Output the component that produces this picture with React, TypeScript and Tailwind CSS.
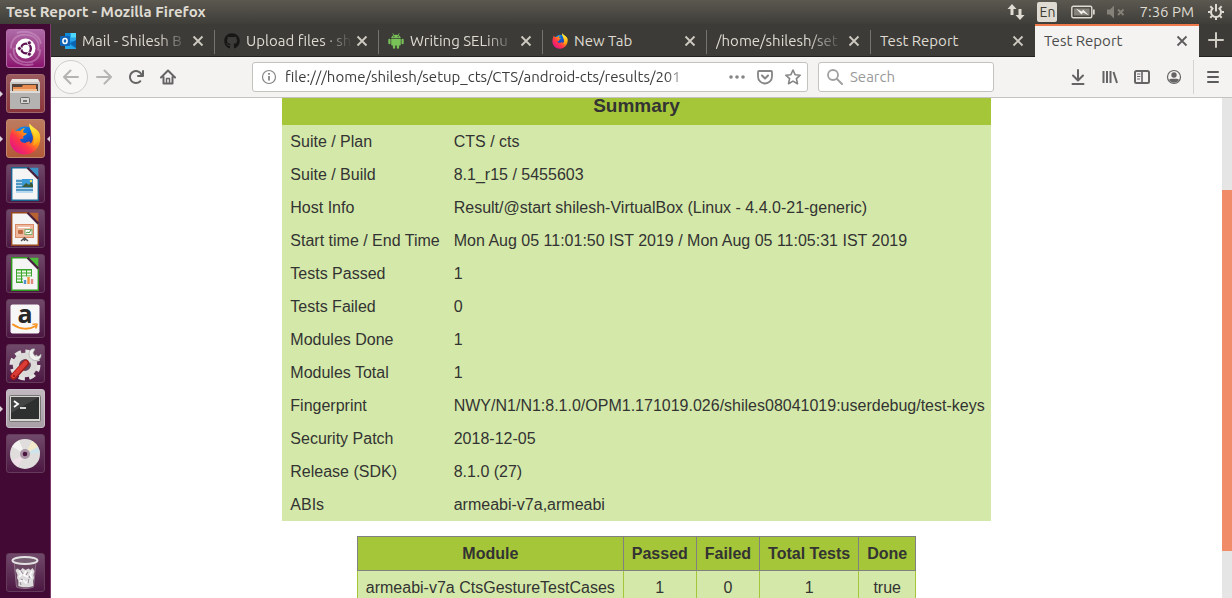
import type { ReactNode } from 'react';
import { FaGithub } from 'react-icons/fa';

const UI = "font-['Ubuntu','Noto_Sans',sans-serif]";

function FirefoxLogo({ id, className }: { id: string; className: string }) {
  return (
    <svg viewBox="0 0 32 32" className={className} aria-hidden="true">
      <defs>
        <linearGradient id={`${id}-body`} x1="0.85" y1="0.1" x2="0.15" y2="0.9">
          <stop offset="0" stopColor="#ffe226" />
          <stop offset="0.35" stopColor="#ff980e" />
          <stop offset="0.65" stopColor="#ff3647" />
          <stop offset="1" stopColor="#e31587" />
        </linearGradient>
        <linearGradient id={`${id}-globe`} x1="0" y1="0" x2="0.6" y2="1">
          <stop offset="0" stopColor="#0a9cf5" />
          <stop offset="0.6" stopColor="#0f5bd0" />
          <stop offset="1" stopColor="#3b2a9c" />
        </linearGradient>
        <linearGradient id={`${id}-flame`} x1="0.4" y1="0" x2="0.6" y2="1">
          <stop offset="0" stopColor="#fff04a" />
          <stop offset="0.5" stopColor="#ffd025" />
          <stop offset="1" stopColor="#ff9a16" />
        </linearGradient>
      </defs>
      <circle cx="16" cy="15" r="11.5" fill={`url(#${id}-globe)`} />
      <path
        d="M4 5c.3 1.400 1 2.500 2 3.500 1.500-.8 3.300-.9 5-.3C12.200 6.300 14 5.200 16 5c-1.300 1.200-2 2.700-1.800 4.300.6.8 2.600.7 3.500 1 .3 1.300-2.700 2.200-3.500 3.200-.1.900.3 1.700.1 2.600-1.300-.6-2.500-.2-3.300.5.6 2.400 2.700 3.600 5 3.300 2-.3 3-1.600 4.500-1.200 1 .4.500 1.400-.4 2.100 4-1 5-5.500 2.500-10.500-.8-3.500-2.200-6-2.100-9.700 3 5.400 10.600 6.400 10.800 14.400C31 24 25 31.500 16 31.500 7.500 31.500.8 25 .8 17 .8 12 2 8 4 5z"
        fill={`url(#${id}-body)`}
      />
      <path
        d="M20.500.6c-.5 3.300.5 5.600 2.500 8 2.500 3.200 3.400 9.600.6 14 4.500-1 7.500-5.600 7.300-10.400C30.500 6.500 22.700 5 20.500.6z"
        fill={`url(#${id}-flame)`}
      />
    </svg>
  );
}

function OutlookIcon() {
  return (
    <svg viewBox="0 0 16 16" className="size-4 shrink-0" aria-hidden="true">
      <path d="M5 0h11v9H5z" fill="#28a8ea" />
      <path d="M10.500 0H16v4.500h-5.500z" fill="#50d9ff" />
      <path d="M5 0h5.500v4.500H5z" fill="#0f89d8" />
      <path d="M5 8h11v8H5z" fill="#1490df" />
      <path d="m5 9 11 6.500V16H5z" fill="#28a8ea" />
      <path d="M10 10.500 16 7v8z" fill="#0a64b0" />
      <rect y="3" width="10" height="10" rx="1" fill="#0f64b8" />
      <ellipse cx="5" cy="8" rx="2.100" ry="2.500" fill="none" stroke="#fff" strokeWidth="1.500" />
    </svg>
  );
}

function AndroidIcon() {
  return (
    <svg viewBox="0 0 16 16" className="size-4 shrink-0" fill="#78c257" aria-hidden="true">
      <path d="M3.200 5.200C3.300 3.300 5 1.700 8 1.700s4.700 1.600 4.800 3.500z" />
      <path d="m4.700.3 1.500 2.200M11.300.3 9.800 2.500" stroke="#78c257" strokeWidth=".8" />
      <path d="M3.200 5.900h9.600v5.700a1 1 0 0 1-1 1H4.200a1 1 0 0 1-1-1z" />
      <rect x=".3" y="5.700" width="2.200" height="5.600" rx="1.100" />
      <rect x="13.500" y="5.700" width="2.200" height="5.600" rx="1.100" />
      <rect x="4.900" y="10.500" width="2.300" height="5.300" rx="1.100" />
      <rect x="8.800" y="10.500" width="2.300" height="5.300" rx="1.100" />
      <circle cx="5.900" cy="3.700" r=".6" fill="#3c3b37" />
      <circle cx="10.100" cy="3.700" r=".6" fill="#3c3b37" />
    </svg>
  );
}

function CloseIcon() {
  return (
    <svg viewBox="0 0 12 12" className="size-3" fill="none" stroke="currentColor" strokeWidth="1.800" aria-hidden="true">
      <path d="m1.500 1.500 9 9m0-9-9 9" />
    </svg>
  );
}

type TabInfo = { title: string; icon?: ReactNode; active?: boolean; divider?: boolean; faded?: boolean };

const tabs: TabInfo[] = [
  { title: 'Mail - Shilesh B', icon: <OutlookIcon />, divider: true, faded: true },
  { title: 'Upload files · sh', icon: <FaGithub className="size-4 shrink-0 text-[#161614]" />, divider: true, faded: true },
  { title: 'Writing SELinu', icon: <AndroidIcon />, divider: true, faded: true },
  { title: 'New Tab', icon: <FirefoxLogo id="tab" className="size-4 shrink-0" />, divider: true },
  { title: '/home/shilesh/set', divider: true, faded: true },
  { title: 'Test Report' },
  { title: 'Test Report', active: true },
];

function Tab({ title, icon, active, divider, faded }: TabInfo) {
  return (
    <div
      className={
        active
          ? 'relative flex min-w-0 flex-1 items-center gap-1 border-t-2 border-[#f0794c] bg-[#f4f3f2] pr-[11px] pb-px pl-[9px] text-[#4c4c4c]'
          : 'relative flex min-w-0 flex-1 items-center gap-1 border-t-2 border-b border-t-transparent border-b-[#22211e] pr-[11px] pl-[9px] text-[#dfdbd2]'
      }
    >
      <button role="tab" aria-selected={!!active} className="flex min-w-0 flex-1 items-center gap-1.5 text-left">
        {icon}
        <span
          className={
            faded
              ? 'min-w-0 flex-1 overflow-hidden text-[15px] leading-5 whitespace-nowrap [mask-image:linear-gradient(to_right,black_72%,transparent)]'
              : 'min-w-0 flex-1 overflow-hidden text-[15px] leading-5 whitespace-nowrap'
          }
        >
          {title}
        </span>
      </button>
      <button aria-label={`Close ${title}`} className="shrink-0 opacity-90">
        <CloseIcon />
      </button>
      {divider && <span className="absolute top-1 right-0 h-6 w-px bg-[#76746e]" />}
    </div>
  );
}

function Tile({ label, tone, running, focused, children }: { label: string; tone: string; running?: boolean; focused?: boolean; children: ReactNode }) {
  return (
    <button aria-label={label} className="relative flex h-[39px] w-full shrink-0 items-center justify-center px-1.5">
      {running && <span className="absolute left-0 h-0 w-0 border-y-3 border-l-3 border-y-transparent border-l-[#ddd5da]" />}
      <span className={`flex size-[39px] shrink-0 items-center justify-center rounded-[3px] border bg-linear-to-b ${tone}`}>{children}</span>
      {focused && <span className="absolute right-0 h-0 w-0 border-y-3 border-r-3 border-y-transparent border-r-[#ddd5da]" />}
    </button>
  );
}

function DocumentIcon({ color, dark, children }: { color: string; dark: string; children: ReactNode }) {
  return (
    <svg viewBox="0 0 28 34" className="h-[34px] w-7" aria-hidden="true">
      <path d="M.7.700h16.600l10 10.300v22.300H.700z" fill="#f5f5f5" stroke={dark} strokeWidth="1.400" />
      <path d="M16 .7h11.300v11z" fill={color} />
      <path d="m16.500.7 10.800 11" stroke="#46203d" strokeWidth="2.200" />
      {children}
    </svg>
  );
}

const dim = 'border-[#643c5a] from-[#70496a] to-[#4c1743]';

function Launcher() {
  return (
    <nav aria-label="Launcher" className="flex w-[51px] shrink-0 flex-col gap-1.5 border-r border-[#7a3b6c] bg-[#410934] pt-[5px] pb-1.5">
      <Tile label="Search your computer" tone="border-[#b66ba9] from-[#ad6aa7] to-[#8b116f]">
        <svg viewBox="0 0 38 38" className="size-[37px]" aria-hidden="true">
          <g fill="none" stroke="#d49bcb" strokeOpacity=".5" strokeWidth="2">
            <path d="M4 19C4 10 10 4 20 5c10 .5 14 8 12 16M34 20c0 9-7 15-16 13-9-1-12-8-11-15" />
            <path d="M10 3C20 0 32 3 35 14M27 35C18 38 6 34 3 24" />
          </g>
          <circle cx="19" cy="19" r="10.200" fill="#fff" />
          <circle cx="19.500" cy="19" r="5" fill="none" stroke="#5d1150" strokeWidth="2.400" />
          <path d="M13 19h4M22.700 13.500l-2 3.500M22.700 24.500l-2-3.500" stroke="#fff" strokeWidth="1" />
          <g fill="#5d1150" stroke="#fff" strokeWidth=".8">
            <circle cx="12.800" cy="19" r="2.100" />
            <circle cx="22.900" cy="13.200" r="2.100" />
            <circle cx="22.900" cy="24.800" r="2.100" />
          </g>
        </svg>
      </Tile>
      <Tile label="Files" running tone="border-[#a06a6c] from-[#9b5a5e] to-[#8b353a]">
        <svg viewBox="0 0 32 32" className="size-8" aria-hidden="true">
          <path d="M3 1h26l2 4H1z" fill="#e8e6e2" />
          <rect x="1" y="4" width="30" height="27" rx="1" fill="#c9c7c4" />
          <rect x="3" y="6" width="26" height="8" fill="#55433a" />
          <path d="M4 9h9l1-2h13v7H4z" fill="#e88b4f" />
          <path d="M4 11h24v2H4z" fill="#f4bd8c" />
          <path d="M1 13h30v17a1 1 0 0 1-1 1H2a1 1 0 0 1-1-1z" fill="#b5b3b1" />
          <path d="M1 13h30v2H1z" fill="#dddbd9" />
          <rect x="11.500" y="19.500" width="9" height="6" rx="1" fill="#d7d6d4" stroke="#6c6a68" />
          <rect x="14" y="22" width="4" height="2" fill="#767472" />
        </svg>
      </Tile>
      <Tile label="Firefox" running focused tone="border-[#c08a6e] from-[#bd7b5f] to-[#b25a38]">
        <FirefoxLogo id="dock" className="size-8" />
      </Tile>
      <Tile label="LibreOffice Writer" tone={dim}>
        <DocumentIcon color="#3d93c5" dark="#17648f">
          <rect x="5" y="12" width="17" height="14" fill="#b8daef" />
          <path d="M5 14h17M5 17h17M5 20h17M5 23h17" stroke="#3181b4" strokeWidth="1.400" />
          <rect x="11" y="12" width="11" height="8" fill="#3a9bd8" />
          <path d="m11 20 4-4 3 2 2-3 2 3v2z" fill="#3d5b39" />
          <circle cx="20" cy="14" r="1.300" fill="#f7de5d" />
        </DocumentIcon>
      </Tile>
      <Tile label="LibreOffice Impress" tone={dim}>
        <DocumentIcon color="#b86232" dark="#96471c">
          <rect x="4.500" y="12.500" width="18" height="13" fill="#efb79c" stroke="#d98a66" />
          <path d="M7 15.500h12" stroke="#fff" strokeWidth="1.300" />
          <rect x="7" y="18" width="5" height="4" rx="1" fill="#bd6943" />
          <rect x="14" y="17.500" width="7" height="5" fill="#fff" stroke="#7cab6c" />
          <path d="m15 21 2-1 1 1 2-3" fill="none" stroke="#4a8c37" />
          <path d="m10 29 3.500-3 3.500 3M13.500 25v4" fill="none" stroke="#555" strokeWidth="1.500" />
        </DocumentIcon>
      </Tile>
      <Tile label="LibreOffice Calc" tone={dim}>
        <DocumentIcon color="#4fbd3b" dark="#2d9a1d">
          <rect x="5" y="12" width="16" height="14" fill="#3da52d" />
          <path d="M6 14.500h4m1 0h4m1 0h4M6 17.500h4m1 0h4m1 0h4M6 20.500h4m1 0h4m1 0h4M6 23.500h4m1 0h4" stroke="#eaf8e6" strokeWidth="1.800" />
          <rect x="12" y="19.500" width="11" height="8" fill="#f0f3f7" />
          <path d="M14 23v4" stroke="#4e91cc" strokeWidth="2.400" />
          <path d="M17.500 20v7" stroke="#f09537" strokeWidth="2.400" />
          <path d="M21 22v5" stroke="#e08a80" strokeWidth="2.400" />
        </DocumentIcon>
      </Tile>
      <Tile label="Amazon" tone={dim}>
        <svg viewBox="0 0 30 30" className="size-[30px] overflow-visible" aria-hidden="true">
          <rect x=".5" y=".5" width="29" height="29" rx="2" fill="#f7f7f7" />
          <text x="15" y="19" textAnchor="middle" fill="#262626" className="font-['Open_Sans',sans-serif] text-[25px] font-bold">a</text>
          <path d="M3 20.500c7 5 16 5.500 22.500 1.500" fill="none" stroke="#f79420" strokeWidth="2" strokeLinecap="round" />
          <path d="M22.500 20.500c2-.7 3.500-.6 4.500-.3 0 1.500-.5 3-1.500 4.300" fill="none" stroke="#f79420" strokeWidth="1.500" />
        </svg>
      </Tile>
      <Tile label="System Settings" tone={dim}>
        <svg viewBox="0 0 34 34" className="size-[34px]" aria-hidden="true">
          <circle cx="17" cy="18" r="13" fill="none" stroke="#e3e2e1" strokeWidth="5" strokeDasharray="6 4.210" />
          <circle cx="17" cy="18" r="9" fill="none" stroke="#dcdbda" strokeWidth="6.500" />
          <circle cx="17" cy="18" r="5.500" fill="#62455b" />
          <path d="m17 18 8-9" stroke="#dcdcdb" strokeWidth="4" />
          <path d="M21 7c0-4 3-6 6-5l-2 4 2 3h4l2-2c1 5-4 8-8 6-2-1-4-3-4-6z" fill="#efefee" stroke="#999" strokeWidth=".6" />
          <path d="M5.500 29.500 18 16" stroke="#9f1a17" strokeWidth="6.500" strokeLinecap="round" />
          <path d="M5.500 29 17.500 16" stroke="#db3c35" strokeWidth="4.500" strokeLinecap="round" />
          <circle cx="6" cy="29" r="1" fill="#7d1613" />
        </svg>
      </Tile>
      <Tile label="Terminal" running tone="border-[#c8c0c6] from-[#c1b9bf] to-[#a99fa6]">
        <svg viewBox="0 0 32 27" className="h-[27px] w-8" aria-hidden="true">
          <rect x=".5" y=".5" width="31" height="26" rx="1" fill="#d7d6d3" stroke="#777" />
          <rect x="2" y="2" width="28" height="22" fill="#2d302f" />
          <path d="M2 2h28L2 18z" fill="#424544" />
          <path d="m5 6 4 3-4 3" fill="none" stroke="#fff" strokeWidth="1.800" />
          <path d="M11 13h6" stroke="#fff" strokeWidth="1.600" />
        </svg>
      </Tile>
      <Tile label="Disc" tone={dim}>
        <svg viewBox="0 0 32 32" className="size-8" aria-hidden="true">
          <circle cx="16" cy="16" r="15" fill="#dfdedd" />
          <path d="m16 16 7-13a15 15 0 0 1 6 6z" fill="#f2e9cb" />
          <path d="m16 16 13-7a15 15 0 0 1 2 6z" fill="#cfe3ea" />
          <path d="m16 16-7 13a15 15 0 0 1-6-6z" fill="#efdfe6" />
          <path d="m16 16-6-13.500a15 15 0 0 0-7 6z" fill="#f3f3f2" />
          <circle cx="16" cy="16" r="5" fill="#a995a5" />
          <circle cx="16" cy="16" r="2.300" fill="#4a153f" />
        </svg>
      </Tile>
      <div className="flex-1" />
      <Tile label="Trash" tone={dim}>
        <svg viewBox="0 0 28 33" className="h-[33px] w-7" aria-hidden="true">
          <path d="m3 5 2.500 26c5 2 12 2 17 0L25 5z" fill="#6a4862" stroke="#8e7087" />
          <path d="m4.500 14 2-1.500 3 2 2-2.500 3 2 3-1.500 2 1.500 2-2 2 3-1 4 .5 3-1 3 .3 5c-4 1.800-11 1.800-15 0l.2-5-1.500-3 .5-3z" fill="#dedbdd" />
          <path d="m8 15 3 3-3 3m7-6-2 4 4 2m4-6-2 4 2 3m-13 4 4-2 3 3 4-3" fill="none" stroke="#fbfafb" strokeWidth="1.700" />
          <path d="m10 15 2 3m5-2-2 3m-5 4 2 1m6-1-1 4m-8-1 1 3m8-9 1 2" stroke="#9a9098" strokeWidth="1.100" />
          <ellipse cx="14" cy="4.500" rx="12.500" ry="3.500" fill="#776073" stroke="#e4e1e3" strokeWidth="2" />
        </svg>
      </Tile>
    </nav>
  );
}

function Glyph({ children, className = 'size-4' }: { children: ReactNode; className?: string }) {
  return (
    <svg viewBox="0 0 16 16" className={className} fill="none" stroke="currentColor" strokeWidth="2" strokeLinecap="round" strokeLinejoin="round" aria-hidden="true">
      {children}
    </svg>
  );
}

function ToolButton({ label, children, className = 'text-[#646464]' }: { label: string; children: ReactNode; className?: string }) {
  return (
    <button aria-label={label} className={`flex size-8 shrink-0 items-center justify-center ${className}`}>
      <Glyph>{children}</Glyph>
    </button>
  );
}

function Toolbar() {
  return (
    <div className="flex h-[41px] shrink-0 items-center border-b border-[#c4c2bf] bg-[#f4f3f2] pl-[3px]">
      <button aria-label="Back" className="flex size-[34px] shrink-0 items-center justify-center rounded-full border border-[#d0cecb] bg-[#f8f7f6] text-[#b5b4b2]">
        <Glyph><path d="M15 8H1.500M7.500 1.500 1 8l6.500 6.500" /></Glyph>
      </button>
      <ToolButton label="Forward" className="text-[#b5b4b2]"><path d="M1 8h13.500M8.500 1.500 15 8l-6.500 6.500" /></ToolButton>
      <ToolButton label="Reload">
        <path
          d="M15 1a1 1 0 0 0-1 1v2.418A6.995 6.995 0 1 0 8 15a6.954 6.954 0 0 0 4.950-2.050 1 1 0 0 0-1.414-1.414A5.019 5.019 0 1 1 12.549 6H10a1 1 0 0 0 0 2h5a1 1 0 0 0 1-1V2a1 1 0 0 0-1-1z"
          fill="currentColor"
          stroke="none"
        />
      </ToolButton>
      <ToolButton label="Home">
        <path d="M1 8.500 8 1.500l7 7M3.500 8v6.500h9V8" />
        <path d="M6.500 14V9.500h3V14" strokeWidth="1.500" />
      </ToolButton>
      <div className="mr-2.5 ml-17 flex h-[30px] min-w-0 flex-1 items-center rounded-[3px] border border-[#c4c2bf] bg-white pr-1.5 pl-2 text-[#858585]">
        <button aria-label="Site information" className="shrink-0">
          <svg viewBox="0 0 16 16" className="size-4" fill="none" stroke="currentColor" aria-hidden="true">
            <circle cx="8" cy="8" r="6.500" strokeWidth="1.200" />
            <path d="M8 7v4.500M8 4v1.700" strokeWidth="1.800" />
          </svg>
        </button>
        <input
          aria-label="Address"
          defaultValue="file:///home/shilesh/setup_cts/CTS/android-cts/results/201"
          className="ml-2 min-w-0 flex-1 bg-transparent text-[15px] leading-5 text-[#3c3c3c] outline-none [mask-image:linear-gradient(to_right,black_93%,transparent)]"
        />
        <div className="ml-9 flex shrink-0 items-center gap-3">
          <button aria-label="Page actions">
            <Glyph><path d="M2 8h.01M8 8h.01M14 8h.01" strokeWidth="3.600" /></Glyph>
          </button>
          <button aria-label="Save to Pocket">
            <Glyph><path d="M2 2h12a1 1 0 0 1 1 1v4.500a7 7 0 0 1-14 0V3a1 1 0 0 1 1-1z" strokeWidth="1.800" /><path d="m5 6.500 3 3 3-3" /></Glyph>
          </button>
          <button aria-label="Bookmark this page">
            <Glyph><path d="m8 1 2.100 4.700 5.100.5-3.800 3.500 1.100 5L8 12.100l-4.500 2.600 1.100-5L.800 6.200l5.100-.5z" strokeWidth="1.600" /></Glyph>
          </button>
        </div>
      </div>
      <label className="flex h-[30px] w-44 shrink-0 items-center gap-[7px] rounded-[3px] border border-[#c4c2bf] bg-white px-2 text-[#a0a0a0]">
        <Glyph className="size-4 shrink-0"><circle cx="6" cy="6" r="5" strokeWidth="1.800" /><path d="m10 10 5 5" /></Glyph>
        <input aria-label="Search" placeholder="Search" className="w-full min-w-0 bg-transparent text-[15px] leading-5 outline-none placeholder:text-[#999]" />
      </label>
      <div className="ml-17 flex shrink-0 items-center">
        <ToolButton label="Downloads"><path d="M8 1v10M3 6.500l5 5 5-5M2.500 15h11" /></ToolButton>
        <ToolButton label="Library"><path d="M1.500 2v12M5 2v12M8.500 2v12M11.500 3l3.500 11" strokeLinecap="butt" /></ToolButton>
        <ToolButton label="Sidebars">
          <rect x="1" y="2" width="14" height="12" rx="1.500" />
          <path d="M8 2v12" strokeWidth="1.600" />
          <path d="M3.500 5h2.500M3.500 7.500h2.500M3.500 10h2" strokeWidth="1" />
        </ToolButton>
        <ToolButton label="Account">
          <circle cx="8" cy="8" r="6.500" strokeWidth="1.200" />
          <circle cx="8" cy="6" r="2.700" fill="currentColor" stroke="none" />
          <path d="M3 11c1-1.500 2.500-1.200 3.500-1.200h3c1 0 2.500-.3 3.500 1.200a6 6 0 0 1-10 0z" fill="currentColor" stroke="none" />
        </ToolButton>
      </div>
      <div className="ml-[3px] h-[34px] w-px shrink-0 bg-[#d5d3d0]" />
      <button aria-label="Open menu" className="flex h-8 w-[38px] shrink-0 items-center justify-center text-[#5b5b5b]">
        <Glyph><path d="M3 3h10M3 8h10M3 13h10" /></Glyph>
      </button>
    </div>
  );
}

function TopPanel() {
  return (
    <header className="flex h-6 shrink-0 items-center bg-linear-to-b from-[#5b5850] to-[#3f3e39] pr-2 pl-1.5 text-[15px] leading-5 text-[#dfdbd2]">
      <h1 className="flex-1 truncate font-bold">Test Report - Mozilla Firefox</h1>
      <svg viewBox="0 0 18 16" className="h-4 w-[18px]" fill="currentColor" aria-hidden="true">
        <path d="M5 0 .5 5h3v6h3V5h3zM13 16l4.500-5h-3V5h-3v6h-3z" />
      </svg>
      <button aria-label="Keyboard layout" className="ml-3 flex h-5 w-5 items-center justify-center rounded-xs bg-[#dfdbd2] text-sm leading-5 text-[#3c3b37]">En</button>
      <svg viewBox="0 0 24 14" className="ml-3.5 h-3.5 w-6" aria-hidden="true">
        <rect x=".8" y="1.300" width="20" height="11.400" rx="1.500" fill="none" stroke="#dfdbd2" strokeWidth="1.400" />
        <rect x="3" y="3.500" width="15.500" height="7" fill="#85827a" />
        <path d="M22 4.500h1.700v5H22z" fill="#dfdbd2" />
        <path d="m5 3.500 6 3 1-2 6 6-6-3-1.500 2z" fill="#f4f2ed" />
      </svg>
      <svg viewBox="0 0 18 14" className="ml-3 h-3.5 w-[18px] text-[#85827a]" aria-hidden="true">
        <path d="M0 4.500h3l4-4v13l-4-4H0z" fill="currentColor" />
        <path d="m11 4.500 5.500 5.500m0-5.500L11 10" stroke="currentColor" strokeWidth="1.800" />
      </svg>
      <time className="ml-3.5">7:36 PM</time>
      <svg viewBox="0 0 16 16" className="ml-3.5 size-4" fill="none" stroke="currentColor" aria-hidden="true">
        <path d="M5.300 3.800a5 5 0 1 0 5.400 0" strokeWidth="2" />
        <path d="M8 0v7.500" strokeWidth="2" />
        <path d="M0 8h2.500M13.500 8H16M8 13.500V16M2.300 2.300l1.800 1.800M13.700 2.300l-1.800 1.800M2.300 13.700l1.800-1.800M13.700 13.700l-1.800-1.800" strokeWidth="2" />
      </svg>
    </header>
  );
}

const summary: [string, string][] = [
  ['Suite / Plan', 'CTS / cts'],
  ['Suite / Build', '8.1_r15 / 5455603'],
  ['Host Info', 'Result/@start shilesh-VirtualBox (Linux - 4.4.0-21-generic)'],
  ['Start time / End Time', 'Mon Aug 05 11:01:50 IST 2019 / Mon Aug 05 11:05:31 IST 2019'],
  ['Tests Passed', '1'],
  ['Tests Failed', '0'],
  ['Modules Done', '1'],
  ['Modules Total', '1'],
  ['Fingerprint', 'NWY/N1/N1:8.1.0/OPM1.171019.026/shiles08041019:userdebug/test-keys'],
  ['Security Patch', '2018-12-05'],
  ['Release (SDK)', '8.1.0 (27)'],
  ['ABIs', 'armeabi-v7a,armeabi'],
];

const moduleHeads = ['Module', 'Passed', 'Failed', 'Total Tests', 'Done'];
const modules = [['armeabi-v7a CtsGestureTestCases', '1', '0', '1', 'true']];

function Report() {
  return (
    <main className="flex min-w-0 flex-1 flex-col items-center gap-[15px] overflow-hidden bg-white font-['Liberation_Sans',Arial,sans-serif] text-base leading-[17px] text-[#333]">
      <table className="shrink-0 border-collapse bg-[#d4e9a9]">
        <thead>
          <tr>
            <th colSpan={2} className="bg-[#a5c639] pb-3 text-[19px] leading-[15px] font-bold">Summary</th>
          </tr>
        </thead>
        <tbody>
          {summary.map(([name, value]) => (
            <tr key={name}>
              <th scope="row" className="py-2 pr-1.5 pl-2 text-left font-normal whitespace-nowrap">{name}</th>
              <td className="py-2 pr-1.5 pl-2 whitespace-nowrap">{value}</td>
            </tr>
          ))}
        </tbody>
      </table>
      <table className="shrink-0 border-collapse bg-[#d4e9a9]">
        <thead>
          <tr>
            {moduleHeads.map((head) => (
              <th key={head} className="border border-[#808080] bg-[#a5c639] p-2 font-bold whitespace-nowrap">{head}</th>
            ))}
          </tr>
        </thead>
        <tbody>
          {modules.map((row) => (
            <tr key={row[0]}>
              {row.map((cell, i) => (
                <td key={i} className="border border-[#a5c639] p-2 text-center whitespace-nowrap">{cell}</td>
              ))}
            </tr>
          ))}
        </tbody>
      </table>
    </main>
  );
}

export default function App() {
  return (
    <div className={`flex h-screen flex-col overflow-hidden ${UI}`}>
      <TopPanel />
      <div className="flex min-h-0 flex-1">
        <Launcher />
        <div className="flex min-w-0 flex-1 flex-col">
          <div className="flex h-[33px] shrink-0 bg-[#3c3b37]">
            <div role="tablist" className="flex min-w-0 flex-1">
              {tabs.map((tab, i) => (
                <Tab key={i} {...tab} />
              ))}
            </div>
            <button aria-label="Open a new tab" className="flex w-[33px] shrink-0 items-center justify-center border-b border-[#22211e] text-[#cfccc4]">
              <Glyph><path d="M8 1v14M1 8h14" /></Glyph>
            </button>
          </div>
          <Toolbar />
          <div className="flex min-h-0 flex-1">
            <Report />
            <div className="flex w-2.5 shrink-0 flex-col bg-[#e5e5e5]" aria-hidden="true">
              <div className="grow-[92]" />
              <div className="grow-[361] bg-[#f08c68]" />
              <div className="grow-[47]" />
            </div>
          </div>
        </div>
      </div>
    </div>
  );
}
